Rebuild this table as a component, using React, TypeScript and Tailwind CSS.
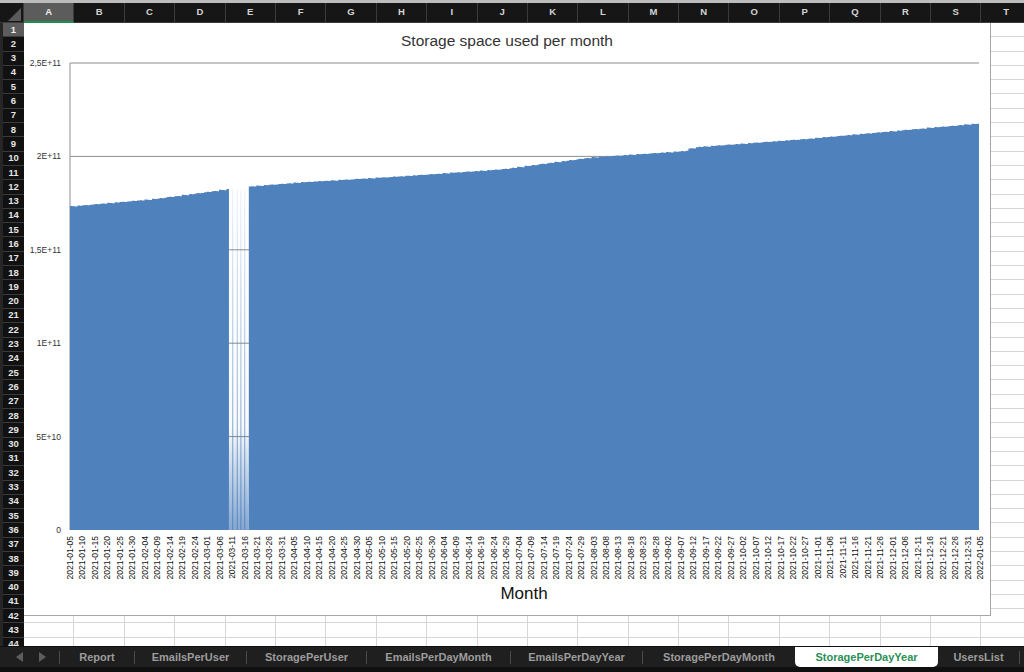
import React from "react";

// Spreadsheet view: one sheet with an embedded area chart

const COLS = "ABCDEFGHIJKLMNOPQRST".split("");
const ROWS = Array.from({ length: 44 }, (_, i) => i + 1);

const TABS = [
  { name: "Report", w: "w-[75px]" },
  { name: "EmailsPerUser", w: "w-[112px]" },
  { name: "StoragePerUser", w: "w-[120px]" },
  { name: "EmailsPerDayMonth", w: "w-[144px]" },
  { name: "EmailsPerDayYear", w: "w-[132px]" },
  { name: "StoragePerDayMonth", w: "w-[152px]" },
  { name: "StoragePerDayYear", w: "w-[143px]", active: true },
  { name: "UsersList", w: "w-[82px]" },
];

const FONT = "'Liberation Sans', Arial, sans-serif";

const PLOT = { left: 46, right: 955, top: 40, bottom: 507 };
const DAYS = 366;
const DX = (PLOT.right - PLOT.left) / DAYS;
const BLUE = "#4f81bd";

// top edge of the area, chart coords
const EDGE: [number, number][] = [
  [46, 183],
  [126, 176],
  [205, 165.5],
  [225, 163],
  [276, 159],
  [376, 153],
  [476, 146],
  [566, 134],
  [656, 128],
  [668, 124],
  [776, 116],
  [876, 107],
  [955, 100],
];

const dayX = (i: number) => PLOT.left + i * DX;

const edgeY = (x: number) => {
  for (let i = 1; i < EDGE.length; i++) {
    const [x0, y0] = EDGE[i - 1];
    const [x1, y1] = EDGE[i];
    if (x <= x1) return y0 + ((x - x0) / (x1 - x0)) * (y1 - y0);
  }
  return EDGE[EDGE.length - 1][1];
};

const areaPath = (from: number, to: number) => {
  let d = `M${dayX(from).toFixed(2)} ${PLOT.bottom}`;
  for (let i = from; i < to; i++) {
    const held = i - (i % 3);
    const wobble = ((i * 7) % 5) * 0.12;
    const y = (edgeY(dayX(Math.max(held, from))) + wobble).toFixed(2);
    d += ` L${dayX(i).toFixed(2)} ${y} L${dayX(i + 1).toFixed(2)} ${y}`;
  }
  return `${d} L${dayX(to).toFixed(2)} ${PLOT.bottom} Z`;
};

const valueY = (v: number) => PLOT.bottom - (v / 2.5) * (PLOT.bottom - PLOT.top);

const Y_TICKS = [
  { v: 2.5, label: "2,5E+11" },
  { v: 2, label: "2E+11" },
  { v: 1.5, label: "1,5E+11" },
  { v: 1, label: "1E+11" },
  { v: 0.5, label: "5E+10" },
  { v: 0, label: "0" },
];

const X_LABELS = Array.from({ length: 74 }, (_, k) => ({
  x: PLOT.left + k * (910 / 73),
  text: new Date(Date.UTC(2021, 0, 5 + 5 * k)).toISOString().slice(0, 10),
}));

const StorageChart = () => (
  <svg width={966} height={592} viewBox="0 0 966 592" className="block">
    <defs>
      <linearGradient id="gapFill" x1="0" y1="0" x2="0" y2="1">
        <stop offset="0" stopColor={BLUE} stopOpacity="0" />
        <stop offset="0.7" stopColor={BLUE} stopOpacity="0.04" />
        <stop offset="1" stopColor={BLUE} stopOpacity="0.7" />
      </linearGradient>
      <linearGradient id="gapLine" x1="0" y1="0" x2="0" y2="1">
        <stop offset="0" stopColor={BLUE} stopOpacity="0.08" />
        <stop offset="1" stopColor={BLUE} stopOpacity="0.7" />
      </linearGradient>
    </defs>

    <text
      x={483}
      y={23}
      textAnchor="middle"
      fontFamily={FONT}
      fontSize={15.5}
      fill="#333333"
    >
      Storage space used per month
    </text>

    {Y_TICKS.filter((t) => t.v > 0).map((t) => (
      <line
        key={t.label}
        x1={PLOT.left}
        x2={PLOT.right}
        y1={valueY(t.v)}
        y2={valueY(t.v)}
        stroke="#8c8c8c"
        strokeWidth={1}
      />
    ))}
    <line x1={PLOT.left} x2={PLOT.left} y1={PLOT.top} y2={PLOT.bottom} stroke="#a8a8a8" strokeWidth={1.3} />

    <path d={areaPath(0, 64)} fill={BLUE} />
    <path d={areaPath(72, DAYS)} fill={BLUE} />
    <rect x={dayX(64)} y={165} width={dayX(72) - dayX(64)} height={PLOT.bottom - 165} fill="url(#gapFill)" />
    {[208, 212.7, 216.2, 220].map((x) => (
      <rect key={x} x={x} y={166} width={1.3} height={PLOT.bottom - 166} fill="url(#gapLine)" />
    ))}

    {Y_TICKS.map((t) => (
      <text
        key={t.label}
        x={37}
        y={valueY(t.v) + 3}
        textAnchor="end"
        fontFamily={FONT}
        fontSize={8.5}
        fill="#333333"
      >
        {t.label}
      </text>
    ))}

    {X_LABELS.map((l) => (
      <text
        key={l.text}
        transform={`translate(${(l.x + 3).toFixed(2)} 513) rotate(-90)`}
        textAnchor="end"
        fontFamily={FONT}
        fontSize={8.5}
        fill="#111111"
      >
        {l.text}
      </text>
    ))}

    <text x={500} y={576} textAnchor="middle" fontFamily={FONT} fontSize={17} fill="#111111">
      Month
    </text>
  </svg>
);

const ColumnHeader = () => (
  <div className="flex h-[20px] shrink-0 bg-[#161616]">
    <div className="relative h-full w-[24px] shrink-0 border-r border-b border-[#3b3b3b]">
      <svg width={24} height={20} className="absolute inset-0">
        <polygon points="8,18 21,18 21,5" fill="#5a5a5a" />
      </svg>
    </div>
    {COLS.map((c) => (
      <div
        key={c}
        className={
          c === "A"
            ? "flex h-full w-[50.4px] shrink-0 items-center justify-center border-r border-b-2 border-r-[#3b3b3b] border-b-[#1f8f4e] bg-[#5c5c5c] text-[9.5px] font-bold text-[#eeeeee]"
            : "flex h-full w-[50.4px] shrink-0 items-center justify-center border-r border-b border-[#3b3b3b] text-[9.5px] font-bold text-[#d4d4d4]"
        }
      >
        {c}
      </div>
    ))}
  </div>
);

const RowHeader = () => (
  <div className="flex w-[24px] shrink-0 flex-col overflow-hidden border-l-[3px] border-[#262626] bg-[#111111]">
    {ROWS.map((r) => (
      <div
        key={r}
        className={
          r === 1
            ? "flex h-[14.3px] shrink-0 items-center justify-center border-b border-[#3b3b3b] bg-[#5c5c5c] text-[9.5px] font-bold text-[#f0f0f0]"
            : "flex h-[14.3px] shrink-0 items-center justify-center border-b border-[#3b3b3b] text-[9.5px] font-bold text-[#e4e4e4]"
        }
      >
        {r}
      </div>
    ))}
  </div>
);

const Cells = () => (
  <div className="flex flex-col bg-white">
    {ROWS.map((r) => (
      <div key={r} className="flex h-[14.3px] shrink-0">
        {COLS.map((c) => (
          <div key={c} className="h-full w-[50.4px] shrink-0 border-r border-b border-[#d6d6d6]" />
        ))}
      </div>
    ))}
  </div>
);

const Arrow = ({ dir }: { dir: "left" | "right" }) => (
  <svg width={8} height={10} viewBox="0 0 8 10">
    <polygon points={dir === "left" ? "7,0 7,10 0,5" : "1,0 1,10 8,5"} fill="#5e5e5e" />
  </svg>
);

const SheetTabs = () => (
  <div className="flex h-[26px] shrink-0 flex-col border-t border-[#101010] bg-[#1f1f1f]">
    <div className="flex h-[20px] items-stretch">
      <div className="flex w-[60px] shrink-0 items-center">
        <div className="flex flex-1 items-center justify-center gap-[14px] pl-[2px]">
          <Arrow dir="left" />
          <Arrow dir="right" />
        </div>
        <div className="h-[13px] w-px bg-[#4a4a4a]" />
      </div>
      {TABS.map((t, i) => {
        const nextActive = TABS[i + 1]?.active;
        if (t.active) {
          return (
            <div
              key={t.name}
              className={`${t.w} flex shrink-0 items-center justify-center rounded-b-[5px] bg-white text-[11px] font-bold text-[#2a8f55]`}
            >
              {t.name}
            </div>
          );
        }
        return (
          <div key={t.name} className={`${t.w} flex shrink-0 items-center`}>
            <div className="flex-1 text-center text-[11px] font-bold text-[#9c9c9c]">{t.name}</div>
            {!nextActive && <div className="h-[13px] w-px bg-[#4a4a4a]" />}
          </div>
        );
      })}
    </div>
    <div className="flex-1 bg-[#0f0f0f]" />
  </div>
);

export default function App() {
  return (
    <div
      className="flex h-[672px] w-[1024px] flex-col overflow-hidden bg-black"
      style={{ fontFamily: FONT }}
    >
      <div className="h-[3px] shrink-0 bg-[#bdbdbd]" />
      <ColumnHeader />
      <div className="flex min-h-0 flex-1 overflow-hidden">
        <RowHeader />
        <div className="relative min-w-0 flex-1 overflow-hidden">
          <Cells />
          <div className="absolute left-0 top-0 h-[593px] w-[967px] overflow-hidden border-r border-b border-[#a6a6a6] bg-white">
            <StorageChart />
          </div>
        </div>
      </div>
      <SheetTabs />
    </div>
  );
}
